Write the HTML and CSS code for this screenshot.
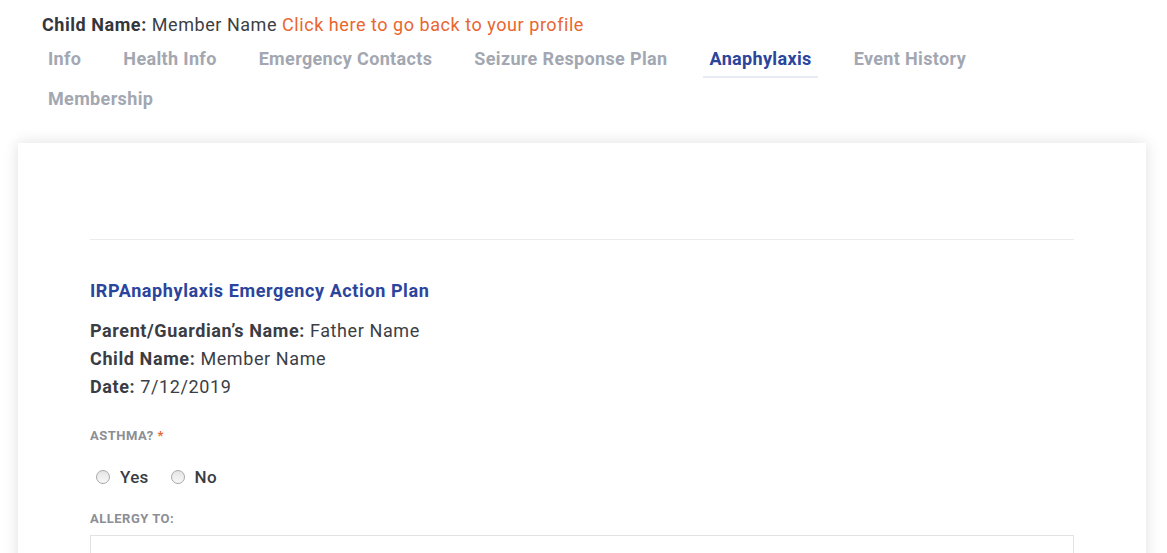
FILE: index.html
```html
<!DOCTYPE html>
<html>
<head>
<meta charset="utf-8">
<link rel="stylesheet" href="styles.css">
</head>
<body>
<div class="page">
  <div class="child-line"><b>Child Name:</b> Member Name <a class="back" href="#">Click here to go back to your profile</a></div>
  <nav class="tabs">
    <a class="tab" href="#">Info</a>
    <a class="tab" href="#">Health Info</a>
    <a class="tab" href="#">Emergency Contacts</a>
    <a class="tab" href="#">Seizure Response Plan</a>
    <a class="tab active" href="#">Anaphylaxis</a>
    <a class="tab" href="#">Event History</a>
    <a class="tab" href="#">Membership</a>
  </nav>
  <div class="card">
    <hr class="rule">
    <h2 class="plan-title">IRPAnaphylaxis Emergency Action Plan</h2>
    <div class="info">
      <div><b>Parent/Guardian’s Name:</b> Father Name</div>
      <div><b>Child Name:</b> Member Name</div>
      <div><b>Date:</b> 7/12/2019</div>
    </div>
    <div class="field-label first">ASTHMA? <span class="req">*</span></div>
    <div class="radios">
      <label class="radio"><span class="dot"></span>Yes</label>
      <label class="radio"><span class="dot"></span>No</label>
    </div>
    <div class="field-label second">ALLERGY TO:</div>
    <div class="input"></div>
  </div>
</div>
</body>
</html>
```
FILE: styles.css
```css
* { box-sizing: border-box; }
html, body { margin: 0; padding: 0; background: #fff; }
body { font-family: Roboto, Lato, sans-serif; color: #3a3d44; overflow: hidden; }
.page { padding: 13px 18px 0 18px; }
.child-line { font-size: 18px; line-height: 24px; padding-left: 24px; color: #3b3e45; letter-spacing: 0.55px; }
.child-line b { font-weight: 700; color: #33363c; }
.back { color: #e9662f; text-decoration: none; }
.tabs { display: flex; flex-wrap: wrap; padding-left: 24px; margin-top: 5px; column-gap: 30px; max-width: 1040px; }
.tab { font-size: 18px; font-weight: 700; color: #a3a7b1; text-decoration: none; padding: 0 6px; height: 40px; line-height: 34px; border-bottom: 2px solid transparent; letter-spacing: 0.35px; }
.tab.active { color: #2b449c; border-bottom-color: #e8ebf1; height: 36px; margin-bottom: 4px; }
.card { margin-top: 21px; width: 1128px; background: #fff; box-shadow: 0 0 14px rgba(0,0,0,0.13); padding: 96px 72px 40px 72px; min-height: 500px; }
.rule { border: 0; border-top: 1px solid #ececec; margin: 0; }
.plan-title { font-size: 18px; font-weight: 700; color: #2b449c; margin: 39px 0 0 0; line-height: 24px; letter-spacing: 0.6px; }
.info { margin-top: 14px; font-size: 18px; line-height: 28px; color: #3b3e45; letter-spacing: 0.6px; }
.info b { font-weight: 700; color: #3a3d44; }
.field-label { font-size: 13px; font-weight: 700; color: #8b8e94; letter-spacing: 0.5px; line-height: 16px; }
.field-label.first { margin-top: 27px; }
.field-label.second { margin-top: 22px; }
.req { color: #e9662f; }
.radios { display: flex; gap: 22px; margin-top: 21px; padding-left: 6px; }
.radio { display: flex; align-items: center; font-size: 17px; font-weight: 500; color: #3a3d44; line-height: 24px; letter-spacing: 0.3px; }
.dot { width: 14px; height: 14px; border-radius: 50%; border: 1px solid #a8a8a8; background: linear-gradient(#e4e4e4, #f8f8f8); margin-right: 10px; }
.input { margin-top: 8px; height: 40px; border: 1px solid #e2e2e2; }
```
